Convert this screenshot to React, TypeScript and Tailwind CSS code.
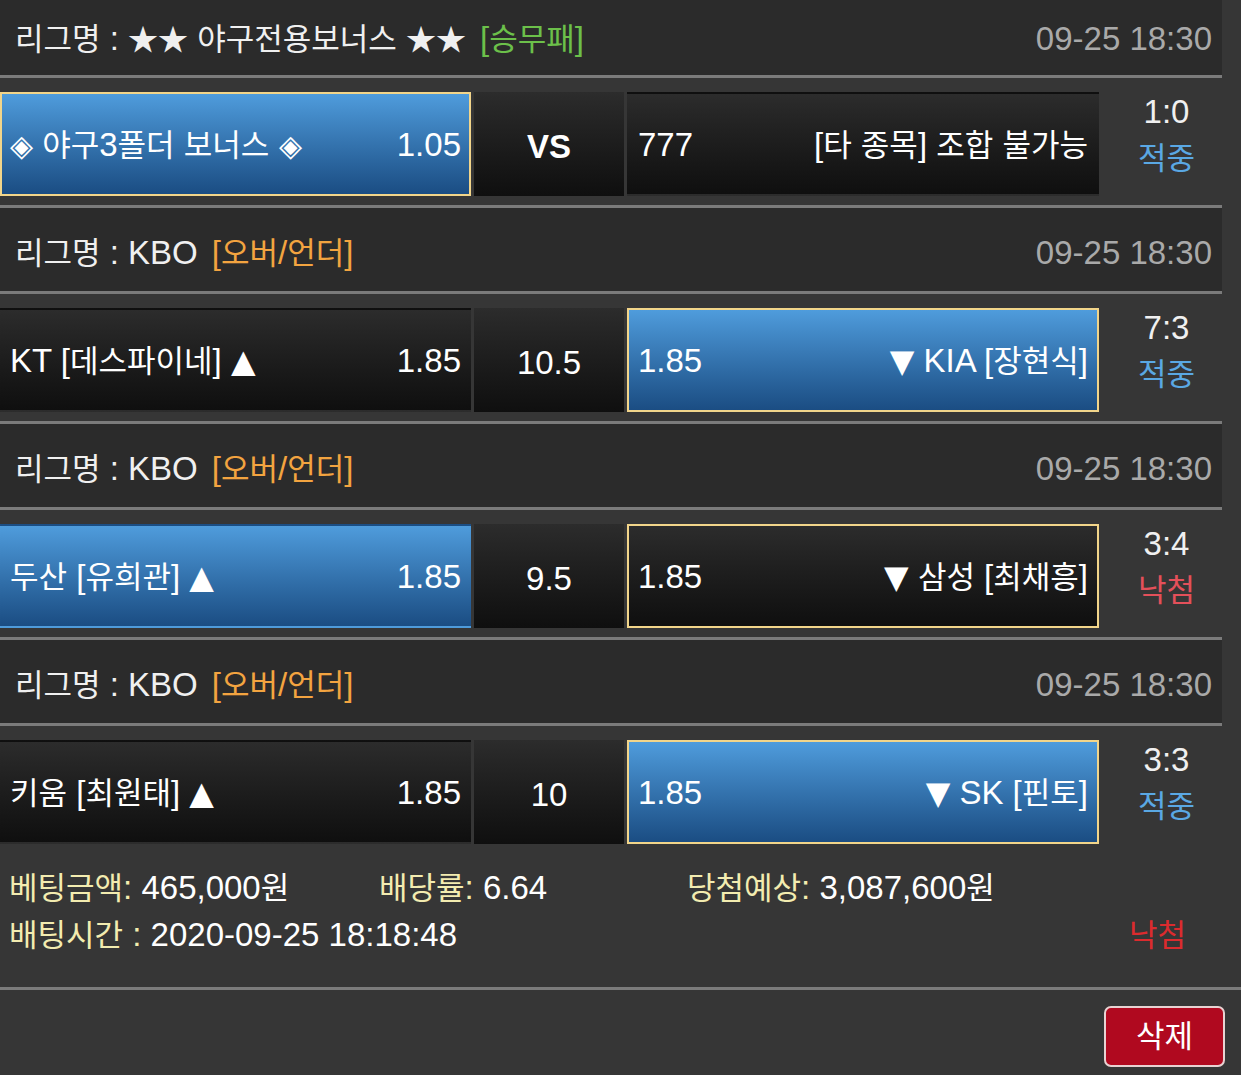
import React from "react";

type Side = { text: string; odds: string; blue?: boolean; picked?: boolean };

interface Match {
  league: string;
  kind: string;
  kindColor: string;
  date: string;
  left: Side;
  mid: string;
  midBold?: boolean;
  right: Side;
  score: string;
  result: string;
  win: boolean;
}

const matches: Match[] = [
  {
    league: "★★ 야구전용보너스 ★★",
    kind: "[승무패]",
    kindColor: "text-[#6cc04a]",
    date: "09-25 18:30",
    left: { text: "◈ 야구3폴더 보너스 ◈", odds: "1.05", blue: true, picked: true },
    mid: "VS",
    midBold: true,
    right: { text: "[타 종목] 조합 불가능", odds: "777" },
    score: "1:0",
    result: "적중",
    win: true,
  },
  {
    league: "KBO",
    kind: "[오버/언더]",
    kindColor: "text-[#f3a440]",
    date: "09-25 18:30",
    left: { text: "KT [데스파이네] ▲", odds: "1.85" },
    mid: "10.5",
    right: { text: "▼ KIA [장현식]", odds: "1.85", blue: true, picked: true },
    score: "7:3",
    result: "적중",
    win: true,
  },
  {
    league: "KBO",
    kind: "[오버/언더]",
    kindColor: "text-[#f3a440]",
    date: "09-25 18:30",
    left: { text: "두산 [유희관] ▲", odds: "1.85", blue: true },
    mid: "9.5",
    right: { text: "▼ 삼성 [최채흥]", odds: "1.85", picked: true },
    score: "3:4",
    result: "낙첨",
    win: false,
  },
  {
    league: "KBO",
    kind: "[오버/언더]",
    kindColor: "text-[#f3a440]",
    date: "09-25 18:30",
    left: { text: "키움 [최원태] ▲", odds: "1.85" },
    mid: "10",
    right: { text: "▼ SK [핀토]", odds: "1.85", blue: true, picked: true },
    score: "3:3",
    result: "적중",
    win: true,
  },
];

const HANGUL = /[\uAC00-\uD7A3]/;
const TRI = /[▲▼]/;
const STAR = /[★◈]/;

// hangul in the screenshot is a bit narrower than the latin face
function T({ children }: { children: string }) {
  const parts = children.split(/([\uAC00-\uD7A3]+|[▲▼]+|[★◈]+)/);
  return (
    <>
      {parts.map((p, i) => {
        if (HANGUL.test(p))
          return (
            <span key={i} className="text-[31px]">
              {p}
            </span>
          );
        if (TRI.test(p))
          return (
            <span key={i} className="font-['DejaVu_Sans',sans-serif] text-[32px]">
              {p}
            </span>
          );
        if (STAR.test(p))
          return (
            <span key={i} className="font-['Noto_Sans_CJK_KR',sans-serif] text-[30px]">
              {p}
            </span>
          );
        return <React.Fragment key={i}>{p}</React.Fragment>;
      })}
    </>
  );
}

function Sep({ full }: { full?: boolean }) {
  return <div className={`h-[3px] bg-[#7b7b7b] ${full ? "w-full" : "w-[1222px]"}`} />;
}

function cellClass(side: Side) {
  const bg = side.blue
    ? "bg-gradient-to-b from-[#4f9cdc] to-[#1b4d83]"
    : "bg-gradient-to-b from-[#2c2c2c] to-[#0f0f0f]";
  const border = side.picked ? "border-[#f2d58a]" : "border-transparent";
  return `h-[104px] flex items-center justify-between border-2 ${border} ${bg}`;
}

function MatchBlock({ m, first }: { m: Match; first?: boolean }) {
  return (
    <>
      <div
        className={`w-[1222px] bg-[#2b2b2b] flex items-center justify-between pl-[15px] pr-[10px] ${
          first ? "h-[75px] pt-[1px]" : "h-[83px] pt-[6px]"
        }`}
      >
        <div className="text-[#f0f0f0]">
          <T>{"리그명 : " + m.league}</T>
          <span className={`ml-[14px] ${m.kindColor}`}>
            <T>{m.kind}</T>
          </span>
        </div>
        <div className="text-[#a9a9a9]">{m.date}</div>
      </div>
      <Sep />
      <div className="w-[1222px] h-[127px] flex pt-[14px]">
        <div className={`w-[471px] px-[8px] ${cellClass(m.left)}`}>
          <span>
            <T>{m.left.text}</T>
          </span>
          <span>{m.left.odds}</span>
        </div>
        <div className="w-[150px] ml-[3px] h-[104px] flex items-center justify-center bg-gradient-to-b from-[#2c2c2c] to-[#0f0f0f] pt-[4px]">
          <span className={m.midBold ? "font-bold" : ""}>{m.mid}</span>
        </div>
        <div className={`w-[472px] ml-[3px] px-[9px] ${cellClass(m.right)}`}>
          <span>{m.right.odds}</span>
          <span>
            <T>{m.right.text}</T>
          </span>
        </div>
        <div className="w-[123px] pl-[12px] flex flex-col items-center leading-[46px] -mt-[3px]">
          <span className="text-[#f0f0f0]">{m.score}</span>
          <span className={m.win ? "text-[#5aa8e4]" : "text-[#e4505a]"}>
            <T>{m.result}</T>
          </span>
        </div>
      </div>
    </>
  );
}

export default function App() {
  return (
    <div className="min-h-screen w-full bg-[#363636] text-white text-[33px] leading-none font-['Liberation_Sans','Noto_Sans_CJK_KR',sans-serif]">
      {matches.map((m, i) => (
        <React.Fragment key={i}>
          {i > 0 && <Sep />}
          <MatchBlock m={m} first={i === 0} />
        </React.Fragment>
      ))}

      <div className="w-[1222px] pl-[9px] pr-[36px] pt-[12px] pb-[28px] leading-[46px]">
        <div className="flex">
          <div className="w-[370px]">
            <span className="text-[#f3ecb0]">
              <T>베팅금액:</T>
            </span>{" "}
            <T>465,000원</T>
          </div>
          <div className="w-[308px]">
            <span className="text-[#f3ecb0]">
              <T>배당률:</T>
            </span>{" "}
            6.64
          </div>
          <div>
            <span className="text-[#f3ecb0]">
              <T>당첨예상:</T>
            </span>{" "}
            <T>3,087,600원</T>
          </div>
        </div>
        <div className="flex justify-between">
          <div>
            <span className="text-[#f3ecb0]">
              <T>배팅시간 :</T>
            </span>{" "}
            2020-09-25 18:18:48
          </div>
          <div className="text-[#dc2b2e]">
            <T>낙첨</T>
          </div>
        </div>
      </div>
      <Sep full />
      <div className="flex justify-end pr-[16px] pt-[16px]">
        <button
          type="button"
          className="w-[121px] h-[61px] rounded-[7px] border-2 border-[#e8d2d2] bg-[#b0091f] text-white flex items-center justify-center"
        >
          <T>삭제</T>
        </button>
      </div>
    </div>
  );
}
